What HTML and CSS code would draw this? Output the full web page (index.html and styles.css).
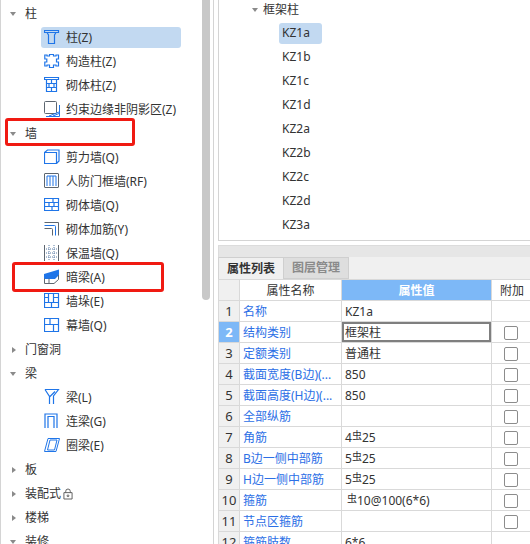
FILE: index.html
```html
<!DOCTYPE html>
<html lang="zh">
<head>
<meta charset="utf-8">
<title>属性列表</title>
<link rel="stylesheet" href="styles.css">
</head>
<body>
<div class="app">
  <aside class="left">
    <ul class="tree">
      <li class="sec"><i class="arrow a-down"></i>柱</li>
      <li class="item selected"><svg class="ic" viewBox="0 0 16 16"><path class="b2" d="M.5 1.500h14v2h-14zM3 3.500l1.500 2.500v8.500h6V6L12 3.500"/></svg>柱(Z)</li>
      <li class="item"><svg class="ic" viewBox="0 0 16 16"><path class="b2" d="M5.500 1.500h4v1.500h2.500v-1h2.500v4h-2V9h2v4H12v-1H9.500v2.500h-4V12H3v1H.8V9h2V6h-2V2H3v1h2.500z"/></svg>构造柱(Z)</li>
      <li class="item"><svg class="ic" viewBox="0 0 16 16"><path class="b2" d="M.5 .5h14v2h-14zM2.500 2.500v12h10v-12M2.500 6.500h10M2.500 10.500h10M7.500 2.500v4M5 6.500v4M10 6.500v4M7.500 10.500v4"/></svg>砌体柱(Z)</li>
      <li class="item"><svg class="ic" viewBox="0 0 16 16"><path class="g" d="M1.500 .5h10a1 1 0 0 1 1 1v10a1 1 0 0 1-1 1h-10a1 1 0 0 1-1-1v-10a1 1 0 0 1 1-1z"/><path class="b" d="M2 15.500h13.500V4M5 15l10-4M9 15l6-2.500"/></svg>约束边缘非阴影区(Z)</li>
      <li class="sec"><i class="arrow a-down"></i>墙</li>
      <li class="item"><svg class="ic" viewBox="0 0 16 16"><path class="b2" d="M.5 3.500h12v11H.5zM.5 3.500l3-2.500h11.500v11l-2.500 2.500"/></svg>剪力墙(Q)</li>
      <li class="item"><svg class="ic" viewBox="0 0 16 16"><path class="g" d="M1 .5h13a.5.5 0 0 1 .5.500v13a.5.5 0 0 1-.5.500H1a.5.5 0 0 1-.5-.500V1A.5.5 0 0 1 1 .5z"/><path class="b" d="M3 3v10M3 3h9v10M6 3v10M9 3v10"/></svg>人防门框墙(RF)</li>
      <li class="item"><svg class="ic" viewBox="0 0 16 16"><path class="b2" d="M.5 1.500h14v12h-14zM.5 5.500h14M.5 9.500h14M9 1.500v4M5 5.500v4M10 5.500v4M8 9.500v4"/></svg>砌体墙(Q)</li>
      <li class="item"><svg class="ic" viewBox="0 0 16 16"><path class="g" d="M.5 1.500h14v13M.5 7.500h7a1 1 0 0 1 1 1v6"/><path class="b" d="M.5 4.500h10a1 1 0 0 1 1 1v9"/></svg>砌体加筋(Y)</li>
      <li class="item"><svg class="ic" viewBox="0 0 16 16"><path class="g" d="M.5 0v16M14.500 0v16"/><path class="d" d="M5 0v16M10 0v16M2 4h11M2 8h11M2 12h11"/></svg>保温墙(Q)</li>
      <li class="item"><svg class="ic" viewBox="0 0 16 16"><path class="fill" d="M0 5 15 .5V6l-4 4H0z"/><path class="g" d="M.5 9.500v5h9.500l4.500-4V6M5 9.500v5"/></svg>暗梁(A)</li>
      <li class="item"><svg class="ic" viewBox="0 0 16 16"><path class="b2" d="M.5 .5h14v14h-14zM.5 4.500h4v-4M4.500 4.500v5M.5 9.500h14M9.500 .5v9M9.500 4.500h5M7.500 9.500v5"/></svg>墙垛(E)</li>
      <li class="item"><svg class="ic" viewBox="0 0 16 16"><path class="b2" d="M.5 1.500h14v13h-14zM.5 7.500h14M6 1.500v6M9.500 7.500v7"/></svg>幕墙(Q)</li>
      <li class="sec"><i class="arrow a-right"></i>门窗洞</li>
      <li class="sec"><i class="arrow a-down"></i>梁</li>
      <li class="item"><svg class="ic" viewBox="0 0 16 16"><path class="b2" d="M1 .5h13.500L9.500 7v8M1 .5l4.500 7V15M5.500 8 11 2.500"/></svg>梁(L)</li>
      <li class="item"><svg class="ic" viewBox="0 0 16 16"><path class="b2" d="M1 15V1h12v14M4 15V3.500h6V15"/></svg>连梁(G)</li>
      <li class="item"><svg class="ic" viewBox="0 0 16 16"><path class="b" d="M4 1.500h11.500L12 14.500H.5zM6 3h7l-2.500 10H3.500z"/></svg>圈梁(E)</li>
      <li class="sec"><i class="arrow a-right"></i>板</li>
      <li class="sec"><i class="arrow a-right"></i>装配式<svg class="lock" viewBox="0 0 11 12"><path d="M1 4.500h9v7H1zM3 4.500V3a2.500 2.500 0 0 1 5 0v1.500"/><circle cx="5.500" cy="8" r="1"/></svg></li>
      <li class="sec"><i class="arrow a-right"></i>楼梯</li>
      <li class="sec"><i class="arrow a-down"></i>装修</li>
    </ul>
    <div class="thumb"></div>
  </aside>
  <main class="right">
    <section class="list">
      <div class="group"><i class="arrow a-down"></i>框架柱</div>
      <ul class="names">
        <li class="sel">KZ1a</li>
        <li>KZ1b</li>
        <li>KZ1c</li>
        <li>KZ1d</li>
        <li>KZ2a</li>
        <li>KZ2b</li>
        <li>KZ2c</li>
        <li>KZ2d</li>
        <li>KZ3a</li>
      </ul>
    </section>
    <div class="titlebar"></div>
    <div class="tabs"><span class="tab on">属性列表</span><span class="tab">图层管理</span></div>
    <table class="props">
      <colgroup><col class="c1"><col class="c2"><col class="c3"><col class="c4"></colgroup>
      <thead>
        <tr><th></th><th>属性名称</th><th class="hl">属性值</th><th>附加</th></tr>
      </thead>
      <tbody>
        <tr><td class="n">1</td><td class="k">名称</td><td class="v">KZ1a</td><td></td></tr>
        <tr><td class="n cur">2</td><td class="k">结构类别</td><td class="v edit">框架柱</td><td><b class="cb"></b></td></tr>
        <tr><td class="n">3</td><td class="k">定额类别</td><td class="v">普通柱</td><td><b class="cb"></b></td></tr>
        <tr><td class="n">4</td><td class="k">截面宽度(B边)(...</td><td class="v">850</td><td><b class="cb"></b></td></tr>
        <tr><td class="n">5</td><td class="k">截面高度(H边)(...</td><td class="v">850</td><td><b class="cb"></b></td></tr>
        <tr><td class="n">6</td><td class="k">全部纵筋</td><td class="v"></td><td><b class="cb"></b></td></tr>
        <tr><td class="n">7</td><td class="k">角筋</td><td class="v">4<span class="rb">虫</span>25</td><td><b class="cb"></b></td></tr>
        <tr><td class="n">8</td><td class="k">B边一侧中部筋</td><td class="v">5<span class="rb">虫</span>25</td><td><b class="cb"></b></td></tr>
        <tr><td class="n">9</td><td class="k">H边一侧中部筋</td><td class="v">5<span class="rb">虫</span>25</td><td><b class="cb"></b></td></tr>
        <tr><td class="n">10</td><td class="k">箍筋</td><td class="v"><span class="rb lead">虫</span>10@100(6*6)</td><td><b class="cb"></b></td></tr>
        <tr><td class="n">11</td><td class="k">节点区箍筋</td><td class="v"></td><td><b class="cb"></b></td></tr>
        <tr><td class="n">12</td><td class="k">箍筋肢数</td><td class="v">6*6</td><td></td></tr>
      </tbody>
    </table>
  </main>
  <div class="mark mark-wall"></div>
  <div class="mark mark-beam"></div>
</div>
</body>
</html>
```
FILE: styles.css
```css
* { box-sizing: border-box; }
html, body { margin: 0; padding: 0; height: 100%; overflow: hidden; background: #fff; }
body { font: 12px/1.2 "Noto Sans", "Noto Sans CJK SC", sans-serif; color: #333; }
ul { list-style: none; margin: 0; padding: 0; }

.app { position: relative; display: flex; width: 530px; height: 544px; overflow: hidden; }

.left { position: relative; width: 214px; flex: none; height: 544px; border-left: 1px solid #d4d4d4; border-right: 1px solid #d4d4d4; overflow: hidden; padding-top: 2px; }
.thumb { position: absolute; top: 0; left: 201px; width: 8px; height: 300px; background: #c8c8c8; border-radius: 0 0 4px 4px; }

.sec, .item { display: flex; align-items: center; height: 24px; white-space: nowrap; }
.sec { padding-left: 9px; }
.sec .arrow { margin-right: 8px; }
.item { position: relative; z-index: 0; margin-left: 40px; width: 140px; padding-left: 25px; }
.item.selected::before { content: ""; position: absolute; left: 0; right: 0; top: 1px; height: 21px; background: #c2d9f1; border-radius: 3px; z-index: -1; }
.ic { position: absolute; left: 3px; top: 3px; width: 16px; height: 16px; fill: none; }
.b { stroke: #1f75e8; stroke-width: 1; fill: none; }
.b2 { stroke: #1f75e8; stroke-width: 1.2; fill: none; }
.g { stroke: #5d6670; stroke-width: 1; fill: none; }
.d { stroke: #5d7fa8; stroke-width: 1; stroke-dasharray: 1 1; fill: none; }
.fill { fill: #1f75e8; }
.lock { width: 10px; height: 12px; margin-left: 2px; fill: none; stroke: #555; stroke-width: 1; }

.arrow { display: inline-block; width: 7px; height: 7px; flex: none; position: relative; }
.arrow::before { content: ""; position: absolute; }
.a-down::before { left: 0; top: 1px; border-left: 3.5px solid transparent; border-right: 3.5px solid transparent; border-top: 4px solid #8a8a8a; }
.a-right::before { left: 2px; top: 0; border-top: 3.5px solid transparent; border-bottom: 3.5px solid transparent; border-left: 4px solid #8a8a8a; }

.right { width: 312px; margin-left: 4px; flex: none; display: flex; flex-direction: column; height: 544px; }
.list { height: 241px; flex: none; border-left: 1px solid #d4d4d4; border-bottom: 1px solid #d4d4d4; overflow: hidden; }
.group { display: flex; align-items: center; height: 21px; padding-left: 33px; }
.group .arrow { margin-right: 4px; }
.names { margin-left: 60px; }
.names li { display: flex; align-items: center; width: 43px; height: 24px; padding-left: 3px; }
.names .sel { position: relative; z-index: 0; }
.names .sel::before { content: ""; position: absolute; left: 0; top: 2px; width: 43px; height: 21px; background: #c2d9f1; border-radius: 3px; z-index: -1; }

.titlebar { height: 12px; flex: none; margin-top: 4px; background: #e6e6e6; border-top: 1px solid #dcdcdc; border-left: 1px solid #dcdcdc; }
.tabs { display: flex; height: 22px; flex: none; background: #f0f0f0; border-left: 1px solid #d4d4d4; }
.tab { width: 65px; display: flex; align-items: center; justify-content: center; padding-top: 1px; background: #dedede; border: 1px solid #cfcfcf; border-left: 0; color: #8a8a8a; font-weight: 700; }
.tab.on { background: #f0f0f0; border-bottom: 0; color: #333; }

.props { border-collapse: collapse; table-layout: fixed; width: 335px; }
.c1 { width: 21px; } .c2 { width: 102px; } .c3 { width: 150px; } .c4 { width: 62px; }
.props th, .props td { height: 21px; padding: 0; border: 1px solid #d9d9d9; font-weight: 400; white-space: nowrap; line-height: 19px; }
.props th { text-align: center; }
.props th:last-child { text-align: left; padding-left: 8px; }
.props th:first-child { background: #f0f0f0; }
.props .hl { background: #7db8f7; color: #fff; font-weight: 700; }
.props .n { background: #f0f0f0; text-align: center; font-size: 13px; }
.props .n.cur { background: #7db8f7; color: #fff; font-weight: 700; }
.props .k { color: #2c6fe6; padding-left: 3px; }
.props .v { padding-left: 3px; }
.props .v.edit { box-shadow: inset 0 0 0 2px #7f7f7f; padding-left: 3px; }
.cb { display: block; width: 14px; height: 14px; margin: 1px 0 0 12px; background: #fff; border: 1px solid #8c8c8c; border-radius: 2px; }
.rb { font-size: 10px; line-height: 1; vertical-align: 3px; }
.rb.lead { margin-left: 2px; }

.mark { position: absolute; border: 3px solid #f01a12; border-radius: 3px; }
.mark-wall { left: 5px; top: 118px; width: 130px; height: 28px; }
.mark-beam { left: 12px; top: 262px; width: 152px; height: 30px; }
```
